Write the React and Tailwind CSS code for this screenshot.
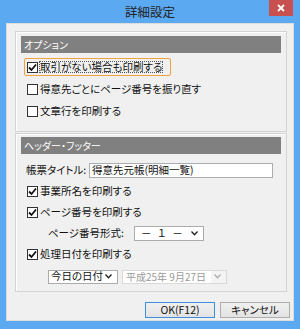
import React from "react";

const font = "font-['Meiryo_UI','Noto_Sans_CJK_JP',sans-serif] [font-feature-settings:'palt']";

function Check({ checked, label, focus }) {
  return (
    <div className="flex items-center h-[18px]">
      <div
        className={`flex items-center h-[18px] pl-[2px] pr-[2px] rounded-[2px] border ${
          focus ? "border-[#f2a23a] w-[147px]" : "border-transparent"
        }`}
      >
        <span className="w-[11px] h-[11px] bg-white border border-[#333] flex items-center justify-center">
          {checked && (
            <svg width="9" height="9" viewBox="0 0 9 9">
              <path d="M1 4.5 L3.5 7 L8 1.5" fill="none" stroke="#111" strokeWidth="1.8" />
            </svg>
          )}
        </span>
        <span className={`ml-[2px] text-[10.5px] leading-none text-[#111] ${focus ? "outline outline-1 outline-dotted outline-[#555]" : ""}`}>
          {label}
        </span>
      </div>
    </div>
  );
}

function Chevron({ color = "#222" }) {
  return (
    <svg width="7" height="5" viewBox="0 0 7 5">
      <path d="M0.5 0.5 L3.5 3.8 L6.5 0.5" fill="none" stroke={color} strokeWidth="1.3" />
    </svg>
  );
}

function Header({ children }) {
  return (
    <div className="h-[17px] bg-[#808080] text-white text-[10px] leading-none flex items-center pl-[3px]">
      {children}
    </div>
  );
}

export default function App() {
  return (
    <div className={`w-[300px] h-[329px] bg-[#5ba9f1] flex flex-col ${font}`}>
      <div className="relative h-[23px] flex items-center justify-center">
        <span className="text-[12.5px] text-[#222] leading-none mt-[2px]">詳細設定</span>
        <div className="absolute right-[7px] top-0 w-[24px] h-[16px] bg-[#c8504f] flex items-center justify-center">
          <svg width="8" height="8" viewBox="0 0 8 8">
            <path d="M1 1 L7 7 M7 1 L1 7" stroke="#fff" strokeWidth="1.8" />
          </svg>
        </div>
      </div>

      <div className="mx-[6px] h-[298px] bg-[#f0f0f0] border border-[#dcdcdc] flex flex-col pl-[8px] pr-[6px] pt-[7px]">
        {/* options group */}
        <div className="h-[101px] border border-[#d4d4d4] shadow-[inset_1px_1px_0_#fff] px-[5px] pt-[4px] flex flex-col">
          <Header>オプション</Header>
          <div className="flex flex-col gap-[4px] mt-[5px] pl-[3px]">
            <Check checked focus label="取引がない場合も印刷する" />
            <Check label="得意先ごとにページ番号を振り直す" />
            <Check label="文章行を印刷する" />
          </div>
        </div>

        {/* header / footer group */}
        <div className="mt-[1px] h-[159px] border border-[#d4d4d4] shadow-[inset_1px_1px_0_#fff] px-[5px] pt-[3px] flex flex-col">
          <Header>ヘッダー・フッター</Header>
          <div className="flex items-center h-[21px] mt-[6px] pl-[5px]">
            <span className="w-[63px] text-[10.5px] leading-none text-[#111]">帳票タイトル:</span>
            <div className="w-[184px] h-[15px] bg-white border border-[#abadb3] flex items-center pl-[2px] text-[10.5px] leading-none text-[#111]">
              得意先元帳(明細一覧)
            </div>
          </div>
          <div className="flex flex-col pl-[3px]">
            <div className="h-[21px] flex items-center"><Check checked label="事業所名を印刷する" /></div>
            <div className="h-[21px] flex items-center"><Check checked label="ページ番号を印刷する" /></div>
            <div className="h-[21px] flex items-center pl-[24px]">
              <span className="w-[86px] text-[10.5px] leading-none text-[#111]">ページ番号形式:</span>
              <div className="w-[70px] h-[15px] bg-white border border-[#acacac] flex items-center justify-between pl-[6px] pr-[5px] text-[10.5px] leading-none text-[#111]">
                <span className="tracking-[2px]">－ １ －</span>
                <Chevron />
              </div>
            </div>
            <div className="h-[21px] flex items-center"><Check checked label="処理日付を印刷する" /></div>
            <div className="h-[21px] mt-[1px] flex items-center pl-[24px] gap-[4px]">
              <div className="w-[70px] h-[14px] bg-white border border-[#acacac] flex items-center justify-between pl-[2px] pr-[5px] text-[10.5px] leading-none text-[#111]">
                <span>今日の日付</span>
                <Chevron />
              </div>
              <div className="w-[105px] h-[14px] bg-[#f4f4f4] border border-[#d9d9d9] flex items-center justify-between pr-[5px] text-[10px] leading-none text-[#9a9a9a]">
                <span className="h-full flex items-center pl-[3px] pr-[5px] bg-white">平成25年 9月27日</span>
                <Chevron color="#b0b0b0" />
              </div>
            </div>
          </div>
        </div>

        <div className="flex justify-end gap-[5px] mt-[10px] pr-[-3px] mr-[-3px]">
          <button className="w-[70px] h-[16px] border border-[#3c8ee0] bg-gradient-to-b from-[#f0f0f0] to-[#e3e3e3] text-[10.5px] leading-none text-[#111]">
            OK(F12)
          </button>
          <button className="w-[70px] h-[16px] border border-[#adadad] bg-gradient-to-b from-[#f0f0f0] to-[#e3e3e3] text-[10.5px] leading-none text-[#111]">
            キャンセル
          </button>
        </div>
      </div>
    </div>
  );
}
